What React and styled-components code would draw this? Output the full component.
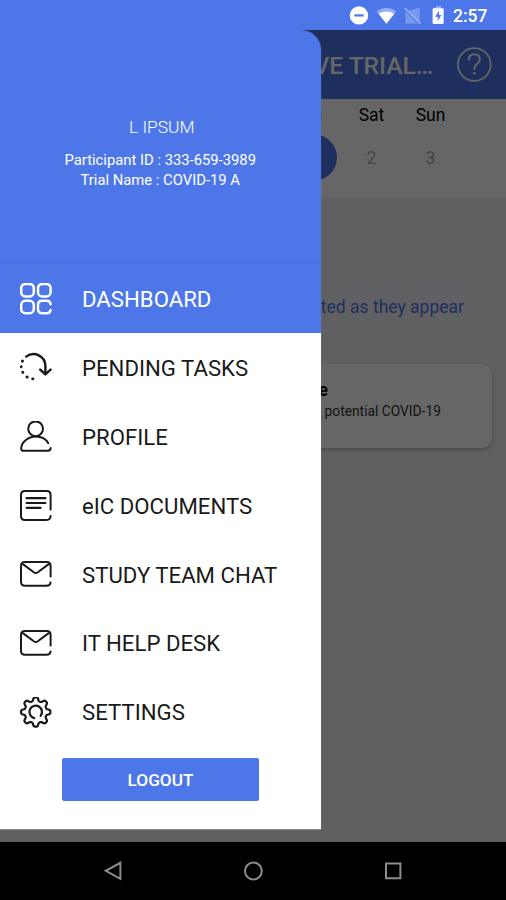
import React from "react"
import styled, { createGlobalStyle, ThemeProvider } from "styled-components"

const theme = {
  colors: {
    primary: "#4d77e9",
    background: "#eff0f6",
    surface: "#ffffff",
    text: "#1a1a1a",
    muted: "#aaaaaa",
    scrim: "rgba(0, 0, 0, 0.6)",
    nav: "#000000",
    navIcon: "#8c8c8c",
  },
}

const GlobalStyle = createGlobalStyle`
  * {
    box-sizing: border-box;
  }
  body {
    margin: 0;
    font-family: Roboto, "Liberation Sans", sans-serif;
  }
`

const Phone = styled.div`
  width: 506px;
  height: 900px;
  display: flex;
  flex-direction: column;
  overflow: hidden;
`

const StatusBar = styled.div`
  height: 30px;
  flex: none;
  display: flex;
  align-items: center;
  justify-content: flex-end;
  padding: 2px 18px 0 0;
  color: #fff;
  background: ${({ theme }) => theme.colors.primary};
`

const Clock = styled.span`
  width: 35px;
  margin-left: 9px;
  font-size: 17.5px;
  font-weight: 500;
  line-height: 20px;
  white-space: nowrap;
`

const Screen = styled.div`
  position: relative;
  flex: 1;
  display: flex;
  flex-direction: column;
  overflow: hidden;
  background: ${({ theme }) => theme.colors.background};
`

const AppBar = styled.header`
  height: 69px;
  flex: none;
  display: flex;
  align-items: center;
  justify-content: flex-end;
  gap: 24px;
  padding-right: 14px;
  color: #fff;
  background: ${({ theme }) => theme.colors.primary};
`

const AppTitle = styled.h1`
  margin: 0;
  padding-top: 2px;
  font-size: 24.5px;
  font-weight: 500;
`

const Week = styled.div`
  height: 98px;
  flex: none;
  display: flex;
  justify-content: flex-end;
  padding: 5px 46px 0 0;
  background: ${({ theme }) => theme.colors.surface};
`

const Day = styled.div`
  width: 59px;
  display: flex;
  flex-direction: column;
  align-items: center;
  gap: 8px;
  font-size: 17.5px;
  line-height: 22px;
  color: #000;
`

const DayNumber = styled.div`
  width: 48px;
  height: 47px;
  display: flex;
  align-items: center;
  justify-content: center;
  border-radius: 50%;
  color: ${({ $selected, theme }) =>
    $selected ? "#fff" : theme.colors.muted};
  background: ${({ $selected, theme }) =>
    $selected ? theme.colors.primary : "transparent"};
`

const Hint = styled.p`
  margin: 98px 42px 0 0;
  font-size: 17.5px;
  line-height: 24px;
  text-align: right;
  color: ${({ theme }) => theme.colors.primary};
`

const TaskCard = styled.section`
  height: 84px;
  margin: 45px 14px 0;
  padding: 14px 51px 0 0;
  border-radius: 10px;
  text-align: right;
  background: ${({ theme }) => theme.colors.surface};
  box-shadow: 0 2px 4px rgba(0, 0, 0, 0.25);
`

const TaskTitle = styled.h2`
  margin: 0 113px 0 0;
  font-size: 17.5px;
  font-weight: 700;
  line-height: 24px;
  color: #000;
`

const TaskText = styled.p`
  margin: 0;
  font-size: 13.8px;
  line-height: 18px;
  color: #333;
`

const Scrim = styled.div`
  position: absolute;
  inset: 0;
  background: ${({ theme }) => theme.colors.scrim};
`

const Drawer = styled.aside`
  position: absolute;
  top: 0;
  left: 0;
  width: 320.5px;
  height: 799px;
  display: flex;
  flex-direction: column;
  border-top-right-radius: 20px;
  box-shadow: 0 1px 1px rgba(180, 180, 180, 0.6);
`

const Account = styled.div`
  height: 234px;
  flex: none;
  display: flex;
  flex-direction: column;
  align-items: center;
  padding-top: 86px;
  color: #fff;
  background: ${({ theme }) => theme.colors.primary};
  border-bottom: 1px solid #4870dc;
  border-top-right-radius: 20px;
`

const AccountName = styled.div`
  padding-left: 3px;
  margin-bottom: 12px;
  font-size: 17.4px;
  font-weight: 300;
  line-height: 22px;
`

const AccountLine = styled.div`
  font-size: 14.8px;
  line-height: 20px;
`

const DrawerBody = styled.div`
  flex: 1;
  display: flex;
  flex-direction: column;
  background: ${({ theme }) => theme.colors.surface};
`

const Menu = styled.nav`
  display: flex;
  flex-direction: column;
`

const MenuItem = styled.a`
  height: 68.9px;
  display: flex;
  align-items: center;
  gap: 30px;
  padding-left: 20px;
  font-size: 22.2px;
  color: ${({ $active, theme }) => ($active ? "#fff" : theme.colors.text)};
  background: ${({ $active, theme }) =>
    $active ? theme.colors.primary : "transparent"};

  svg {
    flex: none;
    margin-top: 2px;
  }
`

const MenuLabel = styled.span`
  padding-top: 1px;
  white-space: nowrap;
`

const LogoutButton = styled.button`
  width: 197px;
  height: 43px;
  margin: 12px 0 0 62px;
  padding: 1px 0 0;
  border: 0;
  border-radius: 2px;
  font-family: inherit;
  font-size: 17.2px;
  font-weight: 500;
  color: #fff;
  background: ${({ theme }) => theme.colors.primary};
`

const NavBar = styled.footer`
  height: 58px;
  flex: none;
  display: flex;
  align-items: center;
  justify-content: center;
  gap: 120px;
  color: ${({ theme }) => theme.colors.navIcon};
  background: ${({ theme }) => theme.colors.nav};
`

const Icon = ({ children }) => (
  <svg
    width="32"
    height="32"
    viewBox="0 0 32 32"
    fill="none"
    stroke="currentColor"
    strokeWidth="2"
    strokeLinecap="round"
    strokeLinejoin="round"
  >
    {children}
  </svg>
)

const DashboardIcon = () => (
  <Icon>
    <g strokeWidth="2.5">
      <rect x="1.2" y="1" width="12.6" height="12.4" rx="4.2" />
      <rect x="18" y="1" width="12.6" height="12.4" rx="4.2" />
      <rect x="1.2" y="17.8" width="12.6" height="12.4" rx="4.2" />
      <path d="M30.6 21.2Q30 17.8 26.6 17.8h-4.4Q18 17.8 18 22v4Q18 30.2 22.2 30.2h4.4Q30 30.2 30.6 27" />
    </g>
  </Icon>
)

const PendingIcon = () => (
  <Icon>
    <path
      d="M6.2 4.6C14-1.2 25.4 3.8 25.4 14v7.4M20.2 17.6l5.2 4.8 5.2-4.8"
      strokeWidth="2.4"
    />
    <path
      d="M2.4 9.2l.1-.2M1.2 14.6v.2M2.7 20.2l.1.2M7 25l.2.1M12.6 26.8h.4"
      strokeWidth="2.8"
    />
  </Icon>
)

const ProfileIcon = () => (
  <Icon>
    <circle cx="15.6" cy="7.8" r="7.4" />
    <path d="M28.3 22.2C26 18 21.2 15.4 15.8 15.4 8 15.4 1.2 21.4 1.2 27.4q0 2.4 2.2 2.4h24.4q2.8 0 2.8-2.8" />
  </Icon>
)

const DocumentIcon = () => (
  <Icon>
    <path d="M30.6 19.6V5q0-4-4-4H5Q1 1 1 5v21q0 4 4 4h21.6q3.6 0 4-4" />
    <path d="M6.6 8.2h18.8M6.6 13h18.8M6.6 17.8h14" strokeWidth="2.2" />
  </Icon>
)

const MailIcon = () => (
  <Icon>
    <path d="M30.6 17.6V7q0-4-4-4H5Q1 3 1 7v16q0 3.8 4 3.8h21.6q3.6 0 4-3.4M2.2 4.6l11.6 8.6q2 1.4 4 0L29.4 4.6" />
  </Icon>
)

// eight rounded teeth around the hub
const gearPath = (() => {
  const points = []
  for (let i = 0; i < 160; i++) {
    const a = (i / 160) * Math.PI * 2
    const r = 12.9 + 1.9 * Math.tanh(1.8 * Math.cos(8 * a))
    points.push(
      `${(15.7 + r * Math.cos(a)).toFixed(2)} ${(15 + r * Math.sin(a)).toFixed(2)}`
    )
  }
  return `M${points.join("L")}Z`
})()

const SettingsIcon = () => (
  <Icon>
    <g strokeWidth="2.2">
      <path d={gearPath} />
      <path d="M14.2 21.1A6.3 6.3 0 1 1 20.6 18.9" />
    </g>
  </Icon>
)

const HelpIcon = () => (
  <svg width="35" height="35" viewBox="0 0 35 35" fill="none" stroke="#fff">
    <circle cx="17.3" cy="17.5" r="16.4" strokeWidth="1.7" />
    <path
      d="M12 12.6q0-5.4 5.4-5.4t5.4 5q0 2.4-2.7 4.6-2.7 2.2-2.7 5.4"
      strokeWidth="2"
      strokeLinecap="round"
    />
    <circle cx="17.4" cy="26.2" r="1.3" fill="#fff" stroke="none" />
  </svg>
)

const StatusIcons = () => (
  <svg width="96" height="22" viewBox="0 0 96 22" fill="#fff">
    <circle cx="11" cy="10.4" r="9.2" />
    <path d="M6.4 10.4h9.2" stroke="#4d77e9" strokeWidth="2.2" />
    <path
      d="M28.6 6.2Q38.4-.8 48.2 6.2L38.4 18.8Z"
      fillOpacity="0.4"
    />
    <path d="M30.6 8.8Q38.4 4.2 46.2 8.8L38.4 18.8Z" />
    <path d="M60.4 5.6L71.6 2.8V16.8Z M57.4 18.4V6.2L69.6 18.4Z" fillOpacity="0.25" />
    <path
      d="M56.8 3L72.4 18.6"
      stroke="#fff"
      strokeOpacity="0.45"
      strokeWidth="1.6"
    />
    <path d="M88 1.4h5v2.2h-5z" fillOpacity="0.5" />
    <rect x="84.6" y="3.2" width="11" height="15.8" rx="1" />
    <path d="M91 5.8l-3.9 5.9h2.6v4.2l3.8-6H91z" fill="#4d77e9" />
  </svg>
)

const menu = [
  { label: "DASHBOARD", icon: DashboardIcon, active: true },
  { label: "PENDING TASKS", icon: PendingIcon },
  { label: "PROFILE", icon: ProfileIcon },
  { label: "eIC DOCUMENTS", icon: DocumentIcon },
  { label: "STUDY TEAM CHAT", icon: MailIcon },
  { label: "IT HELP DESK", icon: MailIcon },
  { label: "SETTINGS", icon: SettingsIcon },
]

const App = () => (
  <ThemeProvider theme={theme}>
    <GlobalStyle />
    <Phone>
      <StatusBar>
        <StatusIcons />
        <Clock>2:57</Clock>
      </StatusBar>
      <Screen>
        <AppBar>
          <AppTitle>VE TRIAL…</AppTitle>
          <HelpIcon />
        </AppBar>
        <Week>
          <Day>
            Fri
            <DayNumber $selected>1</DayNumber>
          </Day>
          <Day>
            Sat
            <DayNumber>2</DayNumber>
          </Day>
          <Day>
            Sun
            <DayNumber>3</DayNumber>
          </Day>
        </Week>
        <Hint>ted as they appear</Hint>
        <TaskCard>
          <TaskTitle>e</TaskTitle>
          <TaskText>potential COVID-19</TaskText>
        </TaskCard>
        <Scrim />
        <Drawer>
          <Account>
            <AccountName>L IPSUM</AccountName>
            <AccountLine>Participant ID : 333-659-3989</AccountLine>
            <AccountLine>Trial Name : COVID-19 A</AccountLine>
          </Account>
          <DrawerBody>
            <Menu>
              {menu.map(({ label, icon: ItemIcon, active }) => (
                <MenuItem key={label} $active={active}>
                  <ItemIcon />
                  <MenuLabel>{label}</MenuLabel>
                </MenuItem>
              ))}
            </Menu>
            <LogoutButton>LOGOUT</LogoutButton>
          </DrawerBody>
        </Drawer>
      </Screen>
      <NavBar>
        <svg width="20" height="20" viewBox="0 0 20 20" fill="none">
          <path d="M17.4 1.8v16L2.8 9.8Z" stroke="currentColor" strokeWidth="2" />
        </svg>
        <svg width="20" height="20" viewBox="0 0 20 20" fill="none">
          <circle cx="10.4" cy="10" r="8.4" stroke="currentColor" strokeWidth="2" />
        </svg>
        <svg width="20" height="20" viewBox="0 0 20 20" fill="none">
          <path d="M3 2.4h14.4v14.8H3Z" stroke="currentColor" strokeWidth="2" />
        </svg>
      </NavBar>
    </Phone>
  </ThemeProvider>
)

export default App
